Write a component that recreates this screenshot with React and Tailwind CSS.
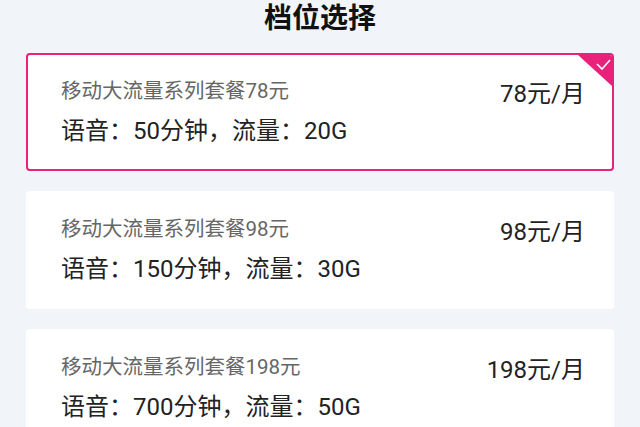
const plans = [
  { name: '移动大流量系列套餐78元', voice: 50, data: '20G', price: 78, selected: true },
  { name: '移动大流量系列套餐98元', voice: 150, data: '30G', price: 98 },
  { name: '移动大流量系列套餐198元', voice: 700, data: '50G', price: 198 },
];

function PlanCard({ plan }) {
  return (
    <div
      className={
        'relative h-[118px] shrink-0 overflow-hidden rounded-[4px] border-2 bg-white ' +
        (plan.selected ? 'border-[#e8217a]' : 'border-white')
      }
    >
      {plan.selected && (
        <svg className="absolute right-0 top-0" width="34" height="31" viewBox="0 0 34 31">
          <polygon points="0,0 34,0 34,31" fill="#e8217a" />
          <polyline points="19,9 24,14 32,5" fill="none" stroke="#fff" strokeWidth="1.6" />
        </svg>
      )}
      <div className="flex items-start justify-between pl-[33px] pr-[27px] pt-[22px]">
        <div className="flex flex-col">
          <p className="text-[20.5px] leading-[28px] text-[#666]">{plan.name}</p>
          <p className="mt-[12px] text-[24px] leading-[28px] text-[#222]">
            语音：{plan.voice}分钟，流量：{plan.data}
          </p>
        </div>
        <p className="pt-[3px] text-[24px] leading-[28px] text-[#222]">{plan.price}元/月</p>
      </div>
    </div>
  );
}

export default function App() {
  return (
    <div
      className="flex h-[427px] w-[640px] flex-col overflow-hidden bg-[#f1f4f8] px-[26px]"
      style={{ fontFamily: 'Roboto, "Noto Sans CJK SC", sans-serif' }}
    >
      <h1 className="text-center text-[28px] font-bold leading-[38px] text-[#111]">档位选择</h1>
      <div className="mt-[15px] flex flex-col gap-[20px]">
        {plans.map((p) => (
          <PlanCard key={p.price} plan={p} />
        ))}
      </div>
    </div>
  );
}
